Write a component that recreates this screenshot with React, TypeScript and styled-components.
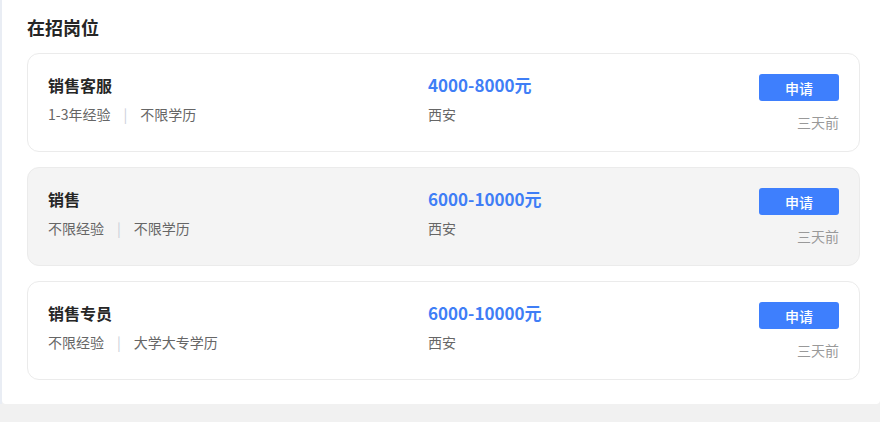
import styled, { createGlobalStyle } from 'styled-components';

const GlobalStyle = createGlobalStyle`
  html, body {
    margin: 0;
    padding: 0;
    background-color: #f1f1f1;
    font-family: "Noto Sans CJK SC", "Noto Sans", sans-serif;
  }
`;

// 전체 레이아웃
const Layout = styled.div`
  display: flex;
  align-items: stretch;
  width: 880px;
`;

const Rail = styled.div`
  width: 2px;
  flex-shrink: 0;
  background-color: #e9edf4;
`;

const Panel = styled.section`
  flex: 1;
  box-sizing: border-box;
  background-color: #fff;
  border-radius: 0 0 4px 4px;
  padding: 14px 20px 24px 25px;
`;

const PanelTitle = styled.h2`
  margin: 0 0 13px;
  font-size: 18px;
  line-height: 26px;
  font-weight: bold;
  color: #262626;
`;

const JobList = styled.div`
  display: flex;
  flex-direction: column;
  gap: 15px;
`;

const JobCard = styled.div<{ $active?: boolean }>`
  display: grid;
  grid-template-columns: 380px 1fr auto;
  box-sizing: border-box;
  height: 99px;
  padding: 20px 20px 0 20px;
  border: 1px solid #ebebeb;
  border-radius: 12px;
  background-color: ${(p) => (p.$active ? '#f4f4f4' : '#fff')};
`;

const Column = styled.div`
  display: flex;
  flex-direction: column;
`;

const RightColumn = styled(Column)`
  align-items: flex-end;
`;

const JobName = styled.div`
  font-size: 16px;
  line-height: 22px;
  font-weight: bold;
  color: #262626;
`;

const Salary = styled.div`
  font-size: 17px;
  line-height: 22px;
  font-weight: bold;
  color: #3f7ef6;
`;

const Meta = styled.div`
  margin-top: 8px;
  font-size: 14px;
  line-height: 20px;
  color: #666;
  display: flex;
  align-items: center;
`;

const Divider = styled.span`
  margin: 0 13px;
  color: #c9ced8;
`;

const ApplyButton = styled.button`
  width: 80px;
  height: 27px;
  padding: 0;
  border: none;
  border-radius: 3px;
  background-color: #3e7ffd;
  color: #fff;
  font-family: inherit;
  font-size: 14px;
  font-weight: 500;
  cursor: pointer;
`;

const Posted = styled.div`
  margin-top: 11px;
  font-size: 14px;
  line-height: 20px;
  color: #999;
`;

const jobs = [
  { name: '销售客服', exp: '1-3年经验', edu: '不限学历', salary: '4000-8000元', city: '西安', active: false },
  { name: '销售', exp: '不限经验', edu: '不限学历', salary: '6000-10000元', city: '西安', active: true },
  { name: '销售专员', exp: '不限经验', edu: '大学大专学历', salary: '6000-10000元', city: '西安', active: false },
];

const App = () => {
  return (
    <>
      <GlobalStyle />
      <Layout>
        <Rail />
        <Panel>
          <PanelTitle>在招岗位</PanelTitle>
          <JobList>
            {jobs.map((job) => (
              <JobCard key={job.name} $active={job.active}>
                <Column>
                  <JobName>{job.name}</JobName>
                  <Meta>
                    {job.exp}
                    <Divider>|</Divider>
                    {job.edu}
                  </Meta>
                </Column>
                <Column>
                  <Salary>{job.salary}</Salary>
                  <Meta>{job.city}</Meta>
                </Column>
                <RightColumn>
                  <ApplyButton>申请</ApplyButton>
                  <Posted>三天前</Posted>
                </RightColumn>
              </JobCard>
            ))}
          </JobList>
        </Panel>
      </Layout>
    </>
  );
};

export default App;
